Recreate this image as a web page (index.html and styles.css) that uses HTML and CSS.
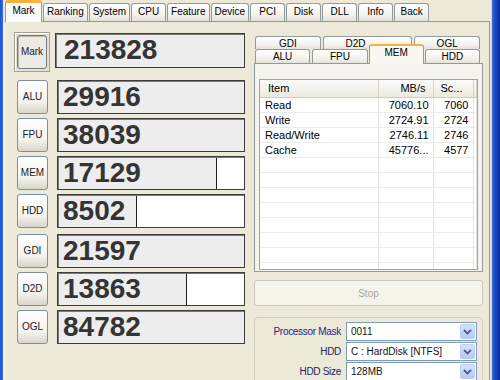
FILE: index.html
```html
<!DOCTYPE html>
<html lang="en">
<head>
  <meta charset="UTF-8" />
  <title>Mark</title>
  <link rel="stylesheet" href="styles.css">
</head>
<body>
  <div class="window">
    <div class="frame-left"></div>

    <div class="main">
      <!-- top tabs -->
      <div class="tabs">
        <div class="tab active">Mark</div>
        <div class="tab">Ranking</div>
        <div class="tab">System</div>
        <div class="tab">CPU</div>
        <div class="tab">Feature</div>
        <div class="tab">Device</div>
        <div class="tab">PCI</div>
        <div class="tab">Disk</div>
        <div class="tab">DLL</div>
        <div class="tab">Info</div>
        <div class="tab">Back</div>
      </div>

      <div class="page">
        <!-- scores -->
        <div class="scores">
          <div class="row row-mark">
            <div class="mark-frame"><div class="btn pressed">Mark</div></div>
            <div class="score score-mark" style="--fill: 100%">213828</div>
          </div>
          <div class="row">
            <div class="btn">ALU</div>
            <div class="score" style="--fill: 100%">29916</div>
          </div>
          <div class="row">
            <div class="btn">FPU</div>
            <div class="score" style="--fill: 100%">38039</div>
          </div>
          <div class="row">
            <div class="btn">MEM</div>
            <div class="score" style="--fill: 85%">17129</div>
          </div>
          <div class="row">
            <div class="btn">HDD</div>
            <div class="score" style="--fill: 42%">8502</div>
          </div>
          <div class="row row-gap">
            <div class="btn">GDI</div>
            <div class="score" style="--fill: 100%">21597</div>
          </div>
          <div class="row">
            <div class="btn">D2D</div>
            <div class="score" style="--fill: 69%">13863</div>
          </div>
          <div class="row">
            <div class="btn">OGL</div>
            <div class="score" style="--fill: 100%">84782</div>
          </div>
        </div>

        <!-- detail side -->
        <div class="side">
          <div class="subtabs">
            <div class="subtab-row">
              <div class="subtab">GDI</div>
              <div class="subtab shifted">D2D</div>
              <div class="subtab">OGL</div>
            </div>
            <div class="subtab-row front">
              <div class="subtab">ALU</div>
              <div class="subtab">FPU</div>
              <div class="subtab active">MEM</div>
              <div class="subtab">HDD</div>
            </div>
          </div>

          <div class="subpanel">
            <div class="list">
              <table>
                <colgroup>
                  <col class="c-item"><col class="c-mbs"><col class="c-sc"><col>
                </colgroup>
                <thead>
                  <tr><th class="left">Item</th><th>MB/s</th><th class="left">Sc...</th><th></th></tr>
                </thead>
                <tbody>
                  <tr><td class="left">Read</td><td>7060.10</td><td>7060</td><td></td></tr>
                  <tr><td class="left">Write</td><td>2724.91</td><td>2724</td><td></td></tr>
                  <tr><td class="left">Read/Write</td><td>2746.11</td><td>2746</td><td></td></tr>
                  <tr><td class="left">Cache</td><td>45776...</td><td>4577</td><td></td></tr>
                  <tr><td></td><td></td><td></td><td></td></tr>
                  <tr><td></td><td></td><td></td><td></td></tr>
                  <tr><td></td><td></td><td></td><td></td></tr>
                  <tr><td></td><td></td><td></td><td></td></tr>
                  <tr><td></td><td></td><td></td><td></td></tr>
                  <tr><td></td><td></td><td></td><td></td></tr>
                  <tr><td></td><td></td><td></td><td></td></tr>
                  <tr><td></td><td></td><td></td><td></td></tr>
                </tbody>
              </table>
            </div>
          </div>

          <button class="stop" disabled>Stop</button>

          <div class="options">
            <label class="opt-label blue">Processor Mask</label>
            <div class="combo"><span>0011</span><span class="drop"><svg width="9" height="6" viewBox="0 0 9 6"><path d="M1 1 L4.5 4.5 L8 1" fill="none" stroke="#4d6185" stroke-width="1.8"/></svg></span></div>
            <label class="opt-label">HDD</label>
            <div class="combo"><span>C : HardDisk [NTFS]</span><span class="drop"><svg width="9" height="6" viewBox="0 0 9 6"><path d="M1 1 L4.5 4.5 L8 1" fill="none" stroke="#4d6185" stroke-width="1.8"/></svg></span></div>
            <label class="opt-label">HDD Size</label>
            <div class="combo"><span>128MB</span><span class="drop"><svg width="9" height="6" viewBox="0 0 9 6"><path d="M1 1 L4.5 4.5 L8 1" fill="none" stroke="#4d6185" stroke-width="1.8"/></svg></span></div>
          </div>
        </div>
      </div>
    </div>

    <div class="frame-right"></div>
  </div>
</body>
</html>
```

FILE: styles.css
```css
* {
  box-sizing: border-box;
}
body {
  margin: 0;
  font-family: "Liberation Sans", Arial, sans-serif;
  background-color: #ece9d8;
  color: #000;
}
.window {
  display: flex;
  width: 500px;
  height: 380px;
  overflow: hidden;
  background-color: #ece9d8;
}
.frame-left {
  width: 3px;
  background: linear-gradient(to right, #1d4fcf, #3a6fe3);
}
.frame-right {
  width: 9px;
  background: linear-gradient(to right, #d6d2c2 0, #d6d2c2 1px, #3d6fe0 1px, #1c4ac6 4px, #0a2a9c 9px);
}
.main {
  flex: 1;
  display: flex;
  flex-direction: column;
  min-width: 0;
}

/* top tabs */
.tabs {
  display: flex;
  align-items: flex-end;
  gap: 1px;
  height: 21px;
  padding-left: 2px;
}
.tab {
  height: 18px;
  min-width: 35px;
  padding: 0 3px;
  border: 1px solid #919b9c;
  border-bottom: none;
  border-radius: 3px 3px 0 0;
  background: linear-gradient(#ffffff, #f4f3ee 60%, #e3e1d7);
  font-size: 10px;
  line-height: 16px;
  text-align: center;
  white-space: nowrap;
}
.tab.active {
  position: relative;
  z-index: 1;
  height: 22px;
  min-width: 37px;
  margin-bottom: -1px;
  border-top: 3px solid #f7b13a;
  background: #fcfcfe;
  line-height: 16px;
}

/* tab page */
.page {
  flex: 1;
  display: flex;
  gap: 9px;
  margin: 0 1px;
  padding: 10px 6px 0 9px;
  border: 1px solid #919b9c;
  border-left-color: #fbfbf8;
  border-bottom: none;
}

/* score column */
.scores {
  width: 231px;
  display: flex;
  flex-direction: column;
  gap: 4px;
}
.row {
  display: flex;
  align-items: center;
  height: 34px;
}
.row-mark {
  height: 40px;
  align-items: flex-start;
  margin-bottom: 4px;
}
.row-gap {
  margin-top: 2px;
}
.btn {
  width: 31px;
  height: 34px;
  margin-left: 3px;
  border: 1px solid #7c8ea6;
  border-radius: 3px;
  background: linear-gradient(#ffffff, #f3f2ed 65%, #d9d6c9);
  font-size: 10px;
  line-height: 32px;
  text-align: center;
  color: #222;
}
.mark-frame {
  width: 36px;
  height: 40px;
  padding: 2px;
  border: 1px solid #a3a195;
  box-shadow: inset 1px 1px 0 #ffffff;
  background: #e4e1d4;
}
.btn.pressed {
  width: 30px;
  height: 34px;
  margin-left: 0;
  border-color: #727b86;
  background: #eceae2;
  box-shadow: inset 1px 1px 0 #b9b6a8;
}
.score {
  flex: 1;
  height: 34px;
  margin-left: 9px;
  padding-left: 5px;
  border: 1px solid #3c3c3c;
  box-shadow: inset 1px 1px 0 #7a7a7a;
  background: linear-gradient(to right,
    #ededed var(--fill),
    #1e1e1e var(--fill),
    #1e1e1e calc(var(--fill) + 1px),
    #ffffff calc(var(--fill) + 1px));
  font-size: 28px;
  font-weight: bold;
  line-height: 32px;
  color: #343434;
}
.score-mark {
  height: 35px;
  margin-top: 1px;
  margin-left: 5px;
  padding-left: 8px;
}

/* detail side */
.side {
  flex: 1;
  display: flex;
  flex-direction: column;
  padding-top: 4px;
  min-width: 0;
}
.subtab-row {
  display: flex;
  gap: 2px;
  height: 13px;
  padding: 0 3px 0 1px;
}
.subtab-row.front {
  height: 14px;
}
.subtab {
  flex: 1;
  border: 1px solid #919b9c;
  border-bottom: none;
  border-radius: 3px 3px 0 0;
  background: linear-gradient(#ffffff, #f1f0ea 70%, #e4e2d8);
  font-size: 10px;
  line-height: 13px;
  text-align: center;
  overflow: hidden;
}
.subtab.shifted {
  padding-right: 24px;
}
.subtab.active {
  position: relative;
  z-index: 1;
  height: 20px;
  margin: -5px -1px -1px;
  border-top: 2px solid #f7b13a;
  background: #f8f7f2;
  line-height: 14px;
}
.subpanel {
  height: 209px;
  padding: 15px 4px 1px 4px;
  border: 1px solid #919b9c;
  background-color: #f4f3ee;
}
.list {
  height: 100%;
  overflow: hidden;
  border: 1px solid #9da6b0;
  background-color: #fff;
}
table {
  width: 100%;
  border-collapse: collapse;
  table-layout: fixed;
  font-size: 11px;
}
.c-item { width: 118px; }
.c-mbs { width: 55px; }
.c-sc { width: 40px; }
th {
  height: 17px;
  padding: 0 7px;
  border-right: 1px solid #d6d3c6;
  border-bottom: 1px solid #d0cdbf;
  background: linear-gradient(#fbfbf9, #ebeadf);
  font-weight: normal;
  text-align: right;
  white-space: nowrap;
  overflow: hidden;
}
td {
  height: 15px;
  padding: 0 4px 0 5px;
  border-right: 1px solid #e3e3e3;
  border-bottom: 1px solid #ebebeb;
  text-align: right;
  white-space: nowrap;
  overflow: hidden;
  line-height: 14px;
}
th.left,
td.left {
  text-align: left;
}
th.left:first-child {
  padding-left: 8px;
}

.stop {
  height: 26px;
  margin-top: 8px;
  border: 1px solid #cac8bb;
  border-radius: 3px;
  background-color: #f5f4ea;
  font-family: "Liberation Sans", Arial, sans-serif;
  font-size: 10px;
  color: #aca899;
}

.options {
  display: grid;
  grid-template-columns: 86px 1fr;
  grid-auto-rows: 19px;
  align-content: start;
  column-gap: 5px;
  row-gap: 1px;
  height: 80px;
  margin-top: 11px;
  padding: 4px 5px 0 0;
  border: 1px solid #d0d0bf;
  border-radius: 4px;
}
.opt-label {
  font-size: 10px;
  letter-spacing: -0.3px;
  line-height: 19px;
  text-align: right;
  color: #252560;
}
.opt-label.blue {
  color: #1f1f8c;
}
.combo {
  display: flex;
  justify-content: space-between;
  align-items: center;
  height: 19px;
  padding: 0 1px 0 4px;
  border: 1px solid #7f9db9;
  background-color: #fff;
  font-size: 10px;
  color: #111;
}
.drop {
  display: flex;
  align-items: center;
  justify-content: center;
  width: 15px;
  height: 15px;
  border: 1px solid #bccdf5;
  border-radius: 2px;
  background: linear-gradient(#d6e2fc, #b5c9f7);
}
```
